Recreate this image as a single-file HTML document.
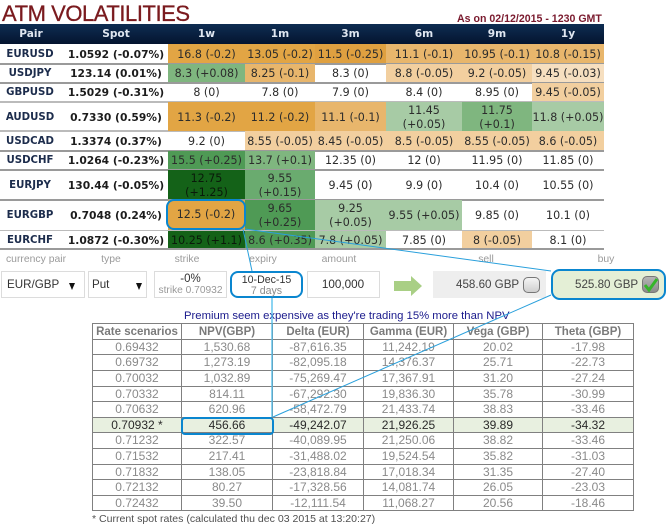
<!DOCTYPE html>
<html><head><meta charset="utf-8"><style>
html,body{margin:0;padding:0;background:#fff}
#p{position:relative;width:667px;height:524px;overflow:hidden;background:#fff;font-family:"Liberation Sans",sans-serif}
#p div,#p span{box-sizing:border-box}
.a{position:absolute}
.title{left:2px;top:0;font-size:22px;letter-spacing:-.45px;color:#7a1a1e;line-height:28px;white-space:nowrap;-webkit-text-stroke:.3px #7a1a1e}
.asof{left:457px;top:13px;font-size:10.6px;font-weight:bold;color:#7a1a2e;line-height:13px;white-space:nowrap}
.hd{position:absolute;left:0;top:24px;width:604px;height:20px;background:linear-gradient(#0e2d52,#04142f)}
.c{position:absolute;display:flex;align-items:center;justify-content:center;text-align:center;font:11.1px/14px "DejaVu Sans",sans-serif;color:#2c2c2c;white-space:nowrap;padding-top:2px}
.h{color:#dfe6f0;font-weight:bold;font-size:10.6px;top:24px;height:19px;padding-top:0}
.sp{font-weight:bold;font-size:10.7px;color:#1c1c1c}
.pr{font-weight:bold;font-size:10.2px;color:#1c2c4c}
.c0{left:0;width:60px}.cs{left:62px;width:108px}
.c1{left:168px;width:77px}.c2{left:245px;width:70px}.c3{left:315px;width:71px}.c4{left:386px;width:76px}.c5{left:462px;width:70px}.c6{left:532px;width:72px}
.r1{top:44px;height:19px}.r2{top:64px;height:18px}.r3{top:83px;height:18px}.r4{top:102px;height:29px}.r5{top:131px;height:19px}.r6{top:151px;height:18px}.r7{top:170px;height:29px}.r8{top:200px;height:30px}.r9{top:231px;height:17px}
.o1{background:#e2a544}.o2{background:#e8b66c}.o3{background:#f2cf9f}.o4{background:#f6dfc0}
.g0{background:#146218}.g1{background:#4f9a55}.g2{background:#7fb67f}.g3{background:#a7cba5}
.ln{position:absolute;left:0;width:604px;height:1.5px;background:#9a9a9a}
.lb{position:absolute;top:253px;height:14px;font-size:10.4px;line-height:14px;color:#9a9a9a;text-align:center;white-space:nowrap}
.box{position:absolute;top:271px;height:27px;border:1px solid #dcdcdc;background:#fff;color:#333}
.sel{font-size:11.6px;line-height:26px;padding-left:5px}
.sel i{position:absolute;width:0;height:0;top:11px;border-left:3.5px solid transparent;border-right:3.5px solid transparent;border-top:7px solid #111}
.cb{position:absolute;border:1px solid #777;border-radius:5px;background:linear-gradient(#f4f4f4,#cfcfcf)}
table{position:absolute;left:92px;top:323px;border-collapse:collapse;table-layout:fixed;width:541px;font-size:12px;color:#8a8a8a}
th,td{border:1px solid #808080;padding:0;text-align:center;overflow:hidden;white-space:nowrap}
th{height:16px;box-sizing:border-box;font-weight:bold;color:#7a7a7a;font-size:11.5px;line-height:13px;padding-top:1px}
td{line-height:13px}
tr.hl td{background:#e8f0e0;color:#2a2a2a}
.foot{left:92px;top:512px;font-size:10.55px;line-height:14px;color:#505050;white-space:nowrap}
.prem{left:184px;top:309px;font-size:11.3px;line-height:15px;color:#1a1a8c;white-space:nowrap}
svg{position:absolute;left:0;top:0}
</style></head><body><div id="p">
<div class="a title">ATM VOLATILITIES</div>
<div class="a asof">As on 02/12/2015 - 1230 GMT</div>
<div class="hd"></div>
<div class="c h c0" style="left:1px">Pair</div><div class="c h cs">Spot</div><div class="c h c1">1w</div><div class="c h c2">1m</div><div class="c h c3">3m</div><div class="c h c4">6m</div><div class="c h c5">9m</div><div class="c h c6">1y</div>

<div class="ln" style="top:63px"></div><div class="ln" style="top:82px"></div><div class="ln" style="top:101px;background:#bbb"></div><div class="ln" style="top:130px;background:#bbb"></div><div class="ln" style="top:150px"></div><div class="ln" style="top:169px"></div><div class="ln" style="top:199px"></div><div class="ln" style="top:229.5px;background:#bbb"></div><div class="ln" style="top:248px"></div>

<div class="c pr c0 r1">EURUSD</div><div class="c sp cs r1">1.0592 (-0.07%)</div><div class="c c1 r1 o1">16.8 (-0.2)</div><div class="c c2 r1 o1">13.05 (-0.2)</div><div class="c c3 r1 o1" style="background:#dfa040">11.5 (-0.25)</div><div class="c c4 r1 o2">11.1 (-0.1)</div><div class="c c5 r1 o2">10.95 (-0.1)</div><div class="c c6 r1 o2">10.8 (-0.15)</div>

<div class="c pr c0 r2">USDJPY</div><div class="c sp cs r2">123.14 (0.01%)</div><div class="c c1 r2 g2">8.3 (+0.08)</div><div class="c c2 r2 o2">8.25 (-0.1)</div><div class="c c3 r2">8.3 (0)</div><div class="c c4 r2 o3">8.8 (-0.05)</div><div class="c c5 r2 o3">9.2 (-0.05)</div><div class="c c6 r2 o4">9.45 (-0.03)</div>

<div class="c pr c0 r3">GBPUSD</div><div class="c sp cs r3">1.5029 (-0.31%)</div><div class="c c1 r3">8 (0)</div><div class="c c2 r3">7.8 (0)</div><div class="c c3 r3">7.9 (0)</div><div class="c c4 r3">8.4 (0)</div><div class="c c5 r3">8.95 (0)</div><div class="c c6 r3 o3">9.45 (-0.05)</div>

<div class="c pr c0 r4">AUDUSD</div><div class="c sp cs r4">0.7330 (0.59%)</div><div class="c c1 r4 o1">11.3 (-0.2)</div><div class="c c2 r4 o1">11.2 (-0.2)</div><div class="c c3 r4 o2">11.1 (-0.1)</div><div class="c c4 r4 g3">11.45<br>(+0.05)</div><div class="c c5 r4 g2">11.75<br>(+0.1)</div><div class="c c6 r4 g3">11.8 (+0.05)</div>

<div class="c pr c0 r5">USDCAD</div><div class="c sp cs r5">1.3374 (0.37%)</div><div class="c c1 r5">9.2 (0)</div><div class="c c2 r5 o3">8.55 (-0.05)</div><div class="c c3 r5 o3">8.45 (-0.05)</div><div class="c c4 r5 o3">8.5 (-0.05)</div><div class="c c5 r5 o3">8.55 (-0.05)</div><div class="c c6 r5 o3">8.6 (-0.05)</div>

<div class="c pr c0 r6">USDCHF</div><div class="c sp cs r6">1.0264 (-0.23%)</div><div class="c c1 r6 g1">15.5 (+0.25)</div><div class="c c2 r6 g2">13.7 (+0.1)</div><div class="c c3 r6">12.35 (0)</div><div class="c c4 r6">12 (0)</div><div class="c c5 r6">11.95 (0)</div><div class="c c6 r6">11.85 (0)</div>

<div class="c pr c0 r7">EURJPY</div><div class="c sp cs r7">130.44 (-0.05%)</div><div class="c c1 r7 g0" style="color:#0a1a0a">12.75<br>(+1.25)</div><div class="c c2 r7 g2" style="background:#6aab6f">9.55<br>(+0.15)</div><div class="c c3 r7">9.45 (0)</div><div class="c c4 r7">9.9 (0)</div><div class="c c5 r7">10.4 (0)</div><div class="c c6 r7">10.55 (0)</div>

<div class="c pr c0 r8">EURGBP</div><div class="c sp cs r8">0.7048 (0.24%)</div><div class="c c1 r8 o1">12.5 (-0.2)</div><div class="c c2 r8 g1">9.65<br>(+0.25)</div><div class="c c3 r8 g3">9.25<br>(+0.05)</div><div class="c c4 r8 g3">9.55 (+0.05)</div><div class="c c5 r8">9.85 (0)</div><div class="c c6 r8">10.1 (0)</div>

<div class="c pr c0 r9">EURCHF</div><div class="c sp cs r9">1.0872 (-0.30%)</div><div class="c c1 r9 g0" style="color:#0a1a0a">10.25 (+1.1)</div><div class="c c2 r9 g1">8.6 (+0.35)</div><div class="c c3 r9 g3">7.8 (+0.05)</div><div class="c c4 r9">7.85 (0)</div><div class="c c5 r9 o3">8 (-0.05)</div><div class="c c6 r9">8.1 (0)</div>

<div class="a" style="left:166px;top:199px;width:80px;height:31px;border:2px solid #0a86cf;border-radius:8px;background:#e2a544;display:flex;align-items:center;justify-content:center;font:11.1px/14px 'DejaVu Sans',sans-serif;color:#2c2c2c">12.5 (-0.2)</div>

<div class="lb" style="left:0;width:72px">currency pair</div>
<div class="lb" style="left:88px;width:46px">type</div>
<div class="lb" style="left:154px;width:66px">strike</div>
<div class="lb" style="left:234px;width:58px">expiry</div>
<div class="lb" style="left:307px;width:64px">amount</div>
<div class="lb" style="left:450px;width:72px">sell</div>
<div class="lb" style="left:570px;width:72px">buy</div>

<div class="box sel" style="left:1px;width:84px">EUR/GBP<i style="left:67px"></i></div>
<div class="box sel" style="left:88px;width:59px;padding-left:3px">Put<i style="left:47px"></i></div>
<div class="box" style="left:154px;width:73px;text-align:center;line-height:11px;padding-top:2px;font-size:11.5px">-0%<br><span style="color:#999;font-size:10.2px">strike 0.70932</span></div>
<div class="a" style="left:230px;top:271px;width:73px;height:27px;border:2px solid #0a86cf;border-radius:8px;background:#fff;text-align:center;font-size:10.6px;line-height:11px;color:#333;padding-top:2px">10-Dec-15<br><span style="color:#8a8a8a">7 days</span></div>
<div class="box" style="left:307px;width:73px;text-align:center;font-size:11.7px;line-height:26px;padding-right:1px">100,000</div>

<svg width="667" height="524" style="z-index:0"><polygon points="394,281 411,281 411,276 422,286 411,296 411,291 394,291" fill="#a9cf85"/></svg>

<div class="a" style="left:433px;top:271px;width:113px;height:27px;background:#eeeeee;font-size:11.6px;line-height:27px;color:#444;padding-left:23px">458.60 GBP</div>
<div class="cb" style="left:523px;top:277px;width:17px;height:16px"></div>
<div class="a" style="left:551px;top:269px;width:115px;height:31px;border:2px solid #0a86cf;border-radius:9px;background:#e4efd6;font-size:11.6px;line-height:27px;color:#444;padding-left:22px">525.80 GBP</div>
<div class="cb" style="left:642px;top:276px;width:17px;height:17px;background:linear-gradient(#b5b5b5,#8a8a8a)"></div>
<svg width="667" height="524"><path d="M645 285 L649 290 L657 279" fill="none" stroke="#35b52a" stroke-width="3"/></svg>

<div class="a prem">Premium seem expensive as they're trading 15% more than NPV</div>

<table>
<colgroup><col style="width:89px"><col style="width:91px"><col style="width:91px"><col style="width:90px"><col style="width:89px"><col style="width:91px"></colgroup>
<tr><th>Rate scenarios</th><th>NPV(GBP)</th><th>Delta (EUR)</th><th>Gamma (EUR)</th><th>Vega (GBP)</th><th>Theta (GBP)</th></tr>
<tr style="height:15px"><td>0.69432</td><td>1,530.68</td><td>-87,616.35</td><td>11,242.19</td><td>20.02</td><td>-17.98</td></tr>
<tr style="height:16px"><td>0.69732</td><td>1,273.19</td><td>-82,095.18</td><td>14,376.37</td><td>25.71</td><td>-22.73</td></tr>
<tr style="height:16px"><td>0.70032</td><td>1,032.89</td><td>-75,269.47</td><td>17,367.91</td><td>31.20</td><td>-27.24</td></tr>
<tr style="height:15px"><td>0.70332</td><td>814.11</td><td>-67,292.30</td><td>19,836.30</td><td>35.78</td><td>-30.99</td></tr>
<tr style="height:16px"><td>0.70632</td><td>620.96</td><td>-58,472.79</td><td>21,433.74</td><td>38.83</td><td>-33.46</td></tr>
<tr class="hl" style="height:15px"><td>0.70932 *</td><td>456.66</td><td>-49,242.07</td><td>21,926.25</td><td>39.89</td><td>-34.32</td></tr>
<tr style="height:16px"><td>0.71232</td><td>322.57</td><td>-40,089.95</td><td>21,250.06</td><td>38.82</td><td>-33.46</td></tr>
<tr style="height:16px"><td>0.71532</td><td>217.41</td><td>-31,488.02</td><td>19,524.54</td><td>35.82</td><td>-31.03</td></tr>
<tr style="height:15px"><td>0.71832</td><td>138.05</td><td>-23,818.84</td><td>17,018.34</td><td>31.35</td><td>-27.40</td></tr>
<tr style="height:16px"><td>0.72132</td><td>80.27</td><td>-17,328.56</td><td>14,081.74</td><td>26.05</td><td>-23.03</td></tr>
<tr style="height:15px"><td>0.72432</td><td>39.50</td><td>-12,111.54</td><td>11,068.27</td><td>20.56</td><td>-18.46</td></tr>
</table>
<div class="a foot">* Current spot rates (calculated thu dec 03 2015 at 13:20:27)</div>

<div class="a" style="left:181px;top:417px;width:93px;height:18px;border:2px solid #0a86cf;border-radius:4px"></div>
<svg width="667" height="524">
<path d="M245 229 L551 271" stroke="#2aa0dc" stroke-width="1" fill="none"/>
<path d="M243 229 L252 271" stroke="#2aa0dc" stroke-width="1" fill="none"/>
<path d="M272 298 L272 417" stroke="#4fbcec" stroke-width="1.3" fill="none"/>
<path d="M551 295 L273 417" stroke="#2aa0dc" stroke-width="1" fill="none"/>
</svg>
</div></body></html>
